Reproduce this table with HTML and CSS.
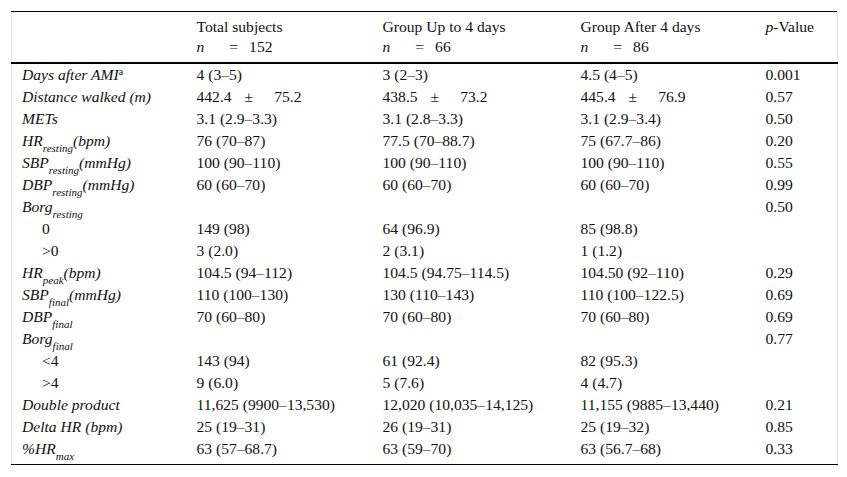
FILE: index.html
```html
<!DOCTYPE html>
<html>
<head>
<meta charset="utf-8">
<link rel="stylesheet" href="styles.css">
</head>
<body>
<table class="tbl">
<colgroup>
<col class="c1"><col class="c2"><col class="c3"><col class="c4"><col class="c5">
</colgroup>
<thead>
<tr>
<th></th>
<th>Total subjects<br><i>n</i><span class="eq">=</span>152</th>
<th>Group Up to 4 days<br><i>n</i><span class="eq">=</span>66</th>
<th>Group After 4 days<br><i>n</i><span class="eq">=</span>86</th>
<th><i>p</i>-Value</th>
</tr>
</thead>
<tbody>
<tr><td class="lab">Days after AMI<sup>a</sup></td><td>4 (3–5)</td><td>3 (2–3)</td><td>4.5 (4–5)</td><td>0.001</td></tr>
<tr><td class="lab">Distance walked (m)</td><td>442.4<span class="pm">±</span>75.2</td><td>438.5<span class="pm">±</span>73.2</td><td>445.4<span class="pm">±</span>76.9</td><td>0.57</td></tr>
<tr><td class="lab">METs</td><td>3.1 (2.9–3.3)</td><td>3.1 (2.8–3.3)</td><td>3.1 (2.9–3.4)</td><td>0.50</td></tr>
<tr><td class="lab">HR<sub>resting</sub>(bpm)</td><td>76 (70–87)</td><td>77.5 (70–88.7)</td><td>75 (67.7–86)</td><td>0.20</td></tr>
<tr><td class="lab">SBP<sub>resting</sub>(mmHg)</td><td>100 (90–110)</td><td>100 (90–110)</td><td>100 (90–110)</td><td>0.55</td></tr>
<tr><td class="lab">DBP<sub>resting</sub>(mmHg)</td><td>60 (60–70)</td><td>60 (60–70)</td><td>60 (60–70)</td><td>0.99</td></tr>
<tr><td class="lab">Borg<sub>resting</sub></td><td></td><td></td><td></td><td>0.50</td></tr>
<tr><td class="ind">0</td><td>149 (98)</td><td>64 (96.9)</td><td>85 (98.8)</td><td></td></tr>
<tr><td class="ind">&gt;0</td><td>3 (2.0)</td><td>2 (3.1)</td><td>1 (1.2)</td><td></td></tr>
<tr><td class="lab">HR<sub>peak</sub>(bpm)</td><td>104.5 (94–112)</td><td>104.5 (94.75–114.5)</td><td>104.50 (92–110)</td><td>0.29</td></tr>
<tr><td class="lab">SBP<sub>final</sub>(mmHg)</td><td>110 (100–130)</td><td>130 (110–143)</td><td>110 (100–122.5)</td><td>0.69</td></tr>
<tr><td class="lab">DBP<sub>final</sub></td><td>70 (60–80)</td><td>70 (60–80)</td><td>70 (60–80)</td><td>0.69</td></tr>
<tr><td class="lab">Borg<sub>final</sub></td><td></td><td></td><td></td><td>0.77</td></tr>
<tr><td class="ind">&lt;4</td><td>143 (94)</td><td>61 (92.4)</td><td>82 (95.3)</td><td></td></tr>
<tr><td class="ind">&gt;4</td><td>9 (6.0)</td><td>5 (7.6)</td><td>4 (4.7)</td><td></td></tr>
<tr><td class="lab">Double product</td><td>11,625 (9900–13,530)</td><td>12,020 (10,035–14,125)</td><td>11,155 (9885–13,440)</td><td>0.21</td></tr>
<tr><td class="lab">Delta HR (bpm)</td><td>25 (19–31)</td><td>26 (19–31)</td><td>25 (19–32)</td><td>0.85</td></tr>
<tr class="last"><td class="lab">%HR<sub>max</sub></td><td>63 (57–68.7)</td><td>63 (59–70)</td><td>63 (56.7–68)</td><td>0.33</td></tr>
</tbody>
</table>
</body>
</html>
```
FILE: styles.css
```css
html, body {
  margin: 0;
  padding: 0;
  background: #fff;
}
body {
  padding: 11px 0 0 11px;
  font-family: "Liberation Serif", "Times New Roman", serif;
  font-size: 15.6px;
  color: #111;
}
.tbl {
  border-collapse: collapse;
  table-layout: fixed;
  width: 826px;
  border-top: 1px solid #000;
  border-bottom: 1px solid #000;
  border-left: 1px solid #e4e4e4;
  border-right: 1px solid #e4e4e4;
}
.c1 { width: 175px; }
.c2 { width: 186px; }
.c3 { width: 198px; }
.c4 { width: 185px; }
.c5 { width: 82px; }
.tbl th {
  font-weight: normal;
  text-align: left;
  vertical-align: top;
  line-height: 20px;
  padding: 5px 10px 5px 10px;
  border-bottom: 2px solid #000;
}
.tbl td {
  text-align: left;
  vertical-align: top;
  line-height: 22px;
  height: 22px;
  padding: 0 10px;
  white-space: nowrap;
}
.tbl tr.last td {
  padding-bottom: 4px;
}
.eq {
  display: inline-block;
  margin: 0 11px 0 25px;
}
.pm {
  display: inline-block;
  margin: 0 21px 0 13px;
}
td.lab {
  font-style: italic;
}
td.ind {
  padding-left: 30px;
}
sub {
  font-size: 11px;
  line-height: 0;
  vertical-align: -6px;
}
sup {
  font-size: 10px;
  line-height: 0;
  vertical-align: 5px;
  font-style: normal;
}
```
